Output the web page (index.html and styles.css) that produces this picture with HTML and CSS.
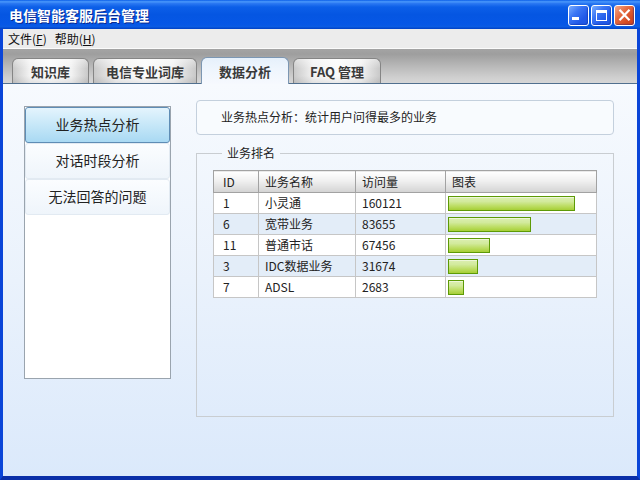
FILE: index.html
```html
<!DOCTYPE html>
<html lang="zh-CN">
<head>
<meta charset="utf-8">
<title>电信智能客服后台管理</title>
<link rel="stylesheet" href="styles.css">
</head>
<body>
<div class="window">
  <div class="titlebar">
    <span class="title">电信智能客服后台管理</span>
    <div class="controls">
      <span class="ctl"><svg width="19" height="19" viewBox="0 0 19 19"><rect x="3" y="11" width="7" height="3" fill="#fff"/></svg></span>
      <span class="ctl"><svg width="19" height="19" viewBox="0 0 19 19"><rect x="4.5" y="4.5" width="10" height="10" fill="none" stroke="#fff" stroke-width="1"/><rect x="4" y="4" width="11" height="3" fill="#fff"/></svg></span>
      <span class="ctl close"><svg width="19" height="19" viewBox="0 0 19 19"><path d="M4.5 3.8 L14.5 14.2 M14.5 3.8 L4.5 14.2" stroke="#fff" stroke-width="2.2" fill="none"/></svg></span>
    </div>
  </div>
  <div class="frame">
    <div class="menubar">
      <span class="menu">文件(<u>F</u>)</span>
      <span class="menu">帮助(<u>H</u>)</span>
    </div>
    <div class="tabstrip">
      <div class="tab w1">知识库</div>
      <div class="tab w2">电信专业词库</div>
      <div class="tab w3 active">数据分析</div>
      <div class="tab w3 faq">FAQ 管理</div>
    </div>
    <div class="content">
      <div class="sidebar">
        <div class="navitem active">业务热点分析</div>
        <div class="navitem">对话时段分析</div>
        <div class="navitem">无法回答的问题</div>
      </div>
      <div class="main">
        <div class="info">业务热点分析：统计用户问得最多的业务</div>
        <fieldset class="rank">
          <legend>业务排名</legend>
          <table class="grid">
            <colgroup>
              <col class="c1"><col class="c2"><col class="c3"><col class="c4">
            </colgroup>
            <thead>
              <tr><th class="idc">ID</th><th>业务名称</th><th>访问量</th><th>图表</th></tr>
            </thead>
            <tbody>
              <tr><td class="idc">1</td><td>小灵通</td><td>160121</td><td class="chart"><div class="bar" style="width:127px"></div></td></tr>
              <tr class="alt"><td class="idc">6</td><td>宽带业务</td><td>83655</td><td class="chart"><div class="bar" style="width:83px"></div></td></tr>
              <tr><td class="idc">11</td><td>普通市话</td><td>67456</td><td class="chart"><div class="bar" style="width:42px"></div></td></tr>
              <tr class="alt"><td class="idc">3</td><td>IDC数据业务</td><td>31674</td><td class="chart"><div class="bar" style="width:30px"></div></td></tr>
              <tr><td class="idc">7</td><td>ADSL</td><td>2683</td><td class="chart"><div class="bar" style="width:16px"></div></td></tr>
            </tbody>
          </table>
        </fieldset>
      </div>
    </div>
  </div>
</div>
</body>
</html>
```

FILE: styles.css
```css
* { box-sizing: border-box; }
html, body { margin: 0; padding: 0; background: #0842d6; }
body { font-family: "Noto Sans CJK SC", "Noto Sans", sans-serif; color: #222; }

.window {
  width: 640px;
  height: 480px;
  display: flex;
  flex-direction: column;
  overflow: hidden;
}

.titlebar {
  height: 29px;
  flex: none;
  display: flex;
  align-items: center;
  justify-content: space-between;
  background: linear-gradient(to bottom, #0a5ee8 0%, #4a98fb 6%, #2a78f2 12%, #0c5fe8 24%, #0556e2 50%, #0657e6 84%, #0b5ce3 92%, #0040c4 100%);
}
.title {
  padding-left: 9px;
  font-size: 14px;
  font-weight: bold;
  color: #fff;
  line-height: 18px;
  text-shadow: 1px 1px 0 #0a2a90;
}
.controls {
  display: flex;
  gap: 2px;
  margin-right: 5px;
  margin-top: 1px;
}
.ctl {
  width: 21px;
  height: 21px;
  border: 1px solid #fff;
  border-radius: 3px;
  display: block;
  background: linear-gradient(135deg, #7aaeff 0%, #3b76f4 35%, #2159e8 70%, #1f56e0 100%);
  box-shadow: inset -1px -1px 1px rgba(0, 30, 140, 0.35);
}
.ctl svg { display: block; }
.ctl.close {
  background: linear-gradient(135deg, #f4a88a 0%, #e4683e 40%, #d34a22 75%, #c8401c 100%);
}

.frame {
  flex: 1;
  display: flex;
  flex-direction: column;
  border-left: 3px solid #0a45d8;
  border-right: 3px solid #0a45d8;
  border-bottom: 4px solid #0a2fa8;
  min-height: 0;
}

.menubar {
  height: 20px;
  flex: none;
  background: #ececec;
  border-bottom: 1px solid #fbfbfb;
  display: flex;
  align-items: center;
  padding-left: 5px;
  font-size: 12px;
  line-height: 16px;
}
.menu { margin-right: 8px; color: #111; }
.menu u { text-decoration: underline; text-underline-offset: 1px; }

.tabstrip {
  height: 35px;
  flex: none;
  display: flex;
  align-items: flex-end;
  gap: 4px;
  padding-left: 9px;
  background: linear-gradient(to bottom, #a4a4a4 0%, #9e9e9e 15%, #b8b8b8 50%, #d0d0d0 85%, #d6d6d6 100%);
  border-bottom: 1px solid #51708f;
}
.tab {
  height: 25px;
  border: 1px solid #858585;
  border-bottom: none;
  border-radius: 6px 6px 0 0;
  font-size: 13px;
  font-weight: bold;
  color: #3a3a3a;
  text-align: center;
  line-height: 25px;
  background:
    linear-gradient(to bottom, rgba(255,255,255,0.4) 0%, rgba(255,255,255,0) 40%, rgba(0,0,0,0) 70%, rgba(0,0,0,0.07) 100%),
    linear-gradient(to right, #c9c9c9 0%, #f2f2f2 22%, #fbfbfb 50%, #f2f2f2 78%, #c9c9c9 100%);
}
.tab.w1 { width: 77px; }
.tab.w2 { width: 104px; }
.tab.w3 { width: 88px; }
.tab.active {
  height: 27px;
  margin-bottom: -1px;
  border-color: #7c97b3;
  background: linear-gradient(to bottom, #e6f0fb 0%, #eef5fd 40%, #f6f9fe 100%);
  line-height: 27px;
}

.content {
  flex: 1;
  display: flex;
  align-items: flex-start;
  padding: 16px 23px 0 21px;
  background: linear-gradient(to bottom, #f7fafe 0%, #eaf2fc 50%, #dbe9fb 100%);
}

.sidebar {
  width: 147px;
  height: 273px;
  margin-top: 6px;
  flex: none;
  background: #fff;
  border: 1px solid #9aa4ae;
  display: flex;
  flex-direction: column;
}
.navitem {
  height: 36px;
  border: 1px solid #e2eaf2;
  border-radius: 3px;
  background: linear-gradient(to bottom, #fbfdff 0%, #eff5fb 100%);
  font-size: 14px;
  line-height: 32px;
  text-align: center;
  color: #222;
}
.navitem.active {
  border-color: #5f8db5;
  background: linear-gradient(to bottom, #e4f4fd 0%, #c6e7f8 50%, #a9d9f3 100%);
}

.main {
  flex: 1;
  margin-left: 25px;
  display: flex;
  flex-direction: column;
}
.info {
  height: 35px;
  border: 1px solid #c4d0dd;
  border-radius: 4px;
  background: #f8fbfe;
  padding-left: 24px;
  font-size: 12px;
  line-height: 32px;
  color: #222;
}

.rank {
  margin: 10px 0 0 0;
  height: 272px;
  border: 1px solid #c9cdd1;
  padding: 9px 16px 0 16px;
  min-width: 0;
}
.rank legend {
  margin-left: 9px;
  padding: 0 5px;
  font-size: 12px;
  line-height: 16px;
  color: #222;
}

.grid {
  width: 383px;
  border-collapse: collapse;
  table-layout: fixed;
  border: 1px solid #9c9c9c;
  font-size: 12px;
  background: #fff;
}
.grid col.c1 { width: 45px; }
.grid col.c2 { width: 97px; }
.grid col.c3 { width: 90px; }
.grid col.c4 { width: 151px; }
.grid th {
  height: 22px;
  padding: 0 6px;
  text-align: left;
  font-weight: normal;
  line-height: 19px;
  border: 1px solid #a2a2a2;
  background: linear-gradient(to bottom, #ffffff 0%, #f0f0f0 45%, #dedede 80%, #d2d2d2 100%);
}
.grid td {
  height: 21px;
  padding: 0 6px;
  line-height: 18px;
  border: 1px solid #c6c6c6;
  white-space: nowrap;
}
.grid .idc { padding-left: 9px; }
.grid tr.alt td { background: #e3edf8; }
.grid td.chart { padding: 0 2px; }
.bar {
  height: 15px;
  border: 1px solid #5d9a06;
  background: linear-gradient(to bottom, #dcefb2 0%, #d2ea9c 35%, #bcdd62 70%, #a6cf36 100%);
  box-shadow: inset 0 1px 0 rgba(255,255,255,0.5);
}
```
